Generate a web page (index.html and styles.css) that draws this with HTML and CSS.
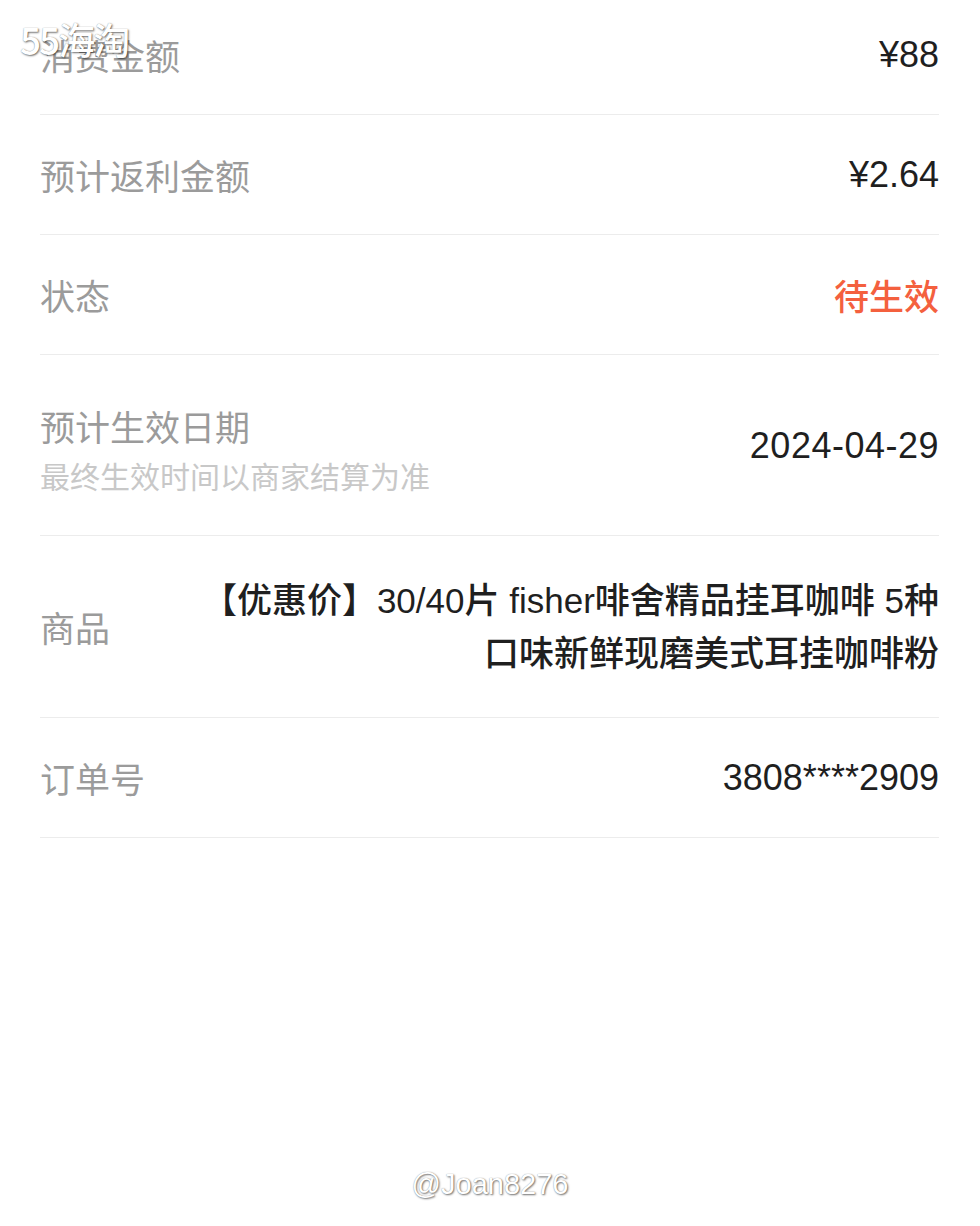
FILE: index.html
```html
<!DOCTYPE html>
<html>
  <head>
    <meta charset="utf-8">
    <title>订单详情</title>
    <link rel="stylesheet" href="styles.css">
  </head>
  <body>

    <div class="detail">
        <div class="row">
            <div class="label">消费金额</div>
            <div class="value">¥88</div>
        </div>
        <div class="row">
            <div class="label">预计返利金额</div>
            <div class="value">¥2.64</div>
        </div>
        <div class="row">
            <div class="label">状态</div>
            <div class="value status">待生效</div>
        </div>
        <div class="row row-tall">
            <div>
                <div class="label">预计生效日期</div>
                <div class="sub">最终生效时间以商家结算为准</div>
            </div>
            <div class="value date">2024-04-29</div>
        </div>
        <div class="row row-goods">
            <div class="label">商品</div>
            <div class="value goods">【优惠价】30/40片 fisher啡舍精品挂耳咖啡 5种口味新鲜现磨美式耳挂咖啡粉</div>
        </div>
        <div class="row">
            <div class="label">订单号</div>
            <div class="value">3808****2909</div>
        </div>
    </div>

    <div class="mark mark-top">55海淘</div>
    <div class="mark mark-bottom">@Joan8276</div>

  </body>
</html>
```

FILE: styles.css
```css
body { margin: 0; background: #fff; font-family: "Liberation Sans", "Noto Sans CJK SC", sans-serif; }

.detail { margin-top: -8px; padding: 0 41px 0 40px; }

.row {
    display: flex;
    justify-content: space-between;
    align-items: center;
    min-height: 120px;
    box-sizing: border-box;
    border-bottom: 1px solid #ececec;
}
.row:first-child { min-height: 123px; padding-top: 4px; }
.row-tall { min-height: 181px; padding: 46px 0 34px; }
.row-goods { min-height: 182px; }

.label { font-family: "Noto Sans CJK SC", sans-serif; font-size: 35px; line-height: 48px; color: #9b9b9b; white-space: nowrap; }
.sub { font-family: "Noto Sans CJK SC", sans-serif; font-size: 30px; line-height: 50px; color: #c8c8c8; white-space: nowrap; }

.value { font-size: 36px; line-height: 48px; color: #1f1f1f; text-align: right; font-weight: 500; }
.status { font-family: "Noto Sans CJK SC", sans-serif; font-size: 35px; color: #f4603e; }
.date { margin-bottom: 10px; letter-spacing: 0.5px; }
.goods { width: 762px; line-height: 53px; font-size: 35px; }

.mark {
    position: absolute;
    color: #fff;
    text-shadow: 1px 1px 2px rgba(0,0,0,0.55), 0 0 1px rgba(0,0,0,0.4);
    white-space: nowrap;
}
.mark-top { left: 20px; top: 12px; font-size: 37px; font-family: "Noto Sans CJK SC", sans-serif; font-weight: 500; letter-spacing: -2px; }
.mark-bottom { left: 0; right: 0; top: 1168px; text-align: center; font-size: 29px; font-family: "Liberation Sans", sans-serif; }
```
